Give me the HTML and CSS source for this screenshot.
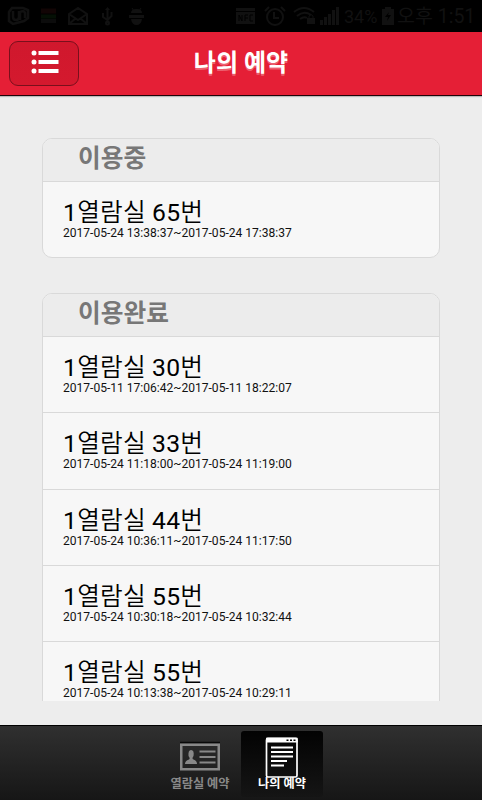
FILE: index.html
```html
<!DOCTYPE html>
<html lang="ko">
<head>
<meta charset="utf-8">
<title>나의 예약</title>
<link rel="stylesheet" href="styles.css">
</head>
<body>
<div class="status">
  <svg class="status-icons" width="160" height="32" viewBox="0 0 160 32" fill="none" stroke="#111" stroke-width="2">
    <path d="M12 8h11l5 2v8l-4 3-11 3-4-3v-9zM13 11v6q0 3 3 3t3-3v-6M20 20v-8q4-2 5 1v5" stroke-width="2.500"/>
    <path d="M41 11h15" stroke="#120505" stroke-width="5"/><path d="M41 16.500h15" stroke="#051005" stroke-width="4"/><path d="M41 21h15" stroke="#0c0c0c" stroke-width="4"/>
    <path d="M69 14l9-6 9 6v10H69zM69 14l9 6 9-6M69 24l7-6M87 24l-7-6"/>
    <path d="M107.500 9v14M103 13v4l4.500 3 4-4v-4"/><path d="M105 10l2.500-3 2.500 3z" fill="#111" stroke="none"/><circle cx="107.500" cy="23" r="1.500"/>
    <path d="M131 13q0-4 5.500-4t5.500 4zM129 15h15v3h-15zM131 19h11q-1 6-5.500 6t-5.500-6z" fill="#111" stroke="none"/><path d="M132 8l2 3M141 8l-2 3" stroke-width="1"/>
  </svg>
  <svg class="status-icons" width="106" height="32" viewBox="234 0 106 32" fill="none" stroke="#111" stroke-width="2">
    <path d="M236 8h19v3h-19zM236 12h19v12h-19z" fill="#111" stroke="none"/>
    <path d="M239 21v-6l3 6v-6M245 21v-6h3M245 18h3M253 15h-3v6h3" stroke="#000" stroke-width="1"/>
    <circle cx="275" cy="17" r="8"/><path d="M274 12v6h5M265 11l4-4M285 11l-4-4"/>
    <path d="M294 12q10-8 20 0M297 16q7-6 14-1M300 19q4-3 7-1"/><path d="M307 18h8v6h-8z" fill="#111" stroke="none"/><path d="M309 18v-2q2-3 4 0v2" stroke-width="1"/>
    <path d="M321.500 25v-5M325.500 25v-8M329.500 25V14M333.500 25V10M337.500 25V7" stroke-width="3"/>
  </svg>
  <span class="percent">34%</span>
  <svg class="battery" width="12" height="20" viewBox="0 0 12 20"><path d="M0 3h3V1h6v2h3v16H0z" fill="#111"/><path d="M7 6l-4 5h3l-1 4 4-6H6z" fill="#000"/></svg>
  <span class="clock">오후 1:51</span>
</div>
<header class="header">
  <button class="menu" aria-label="메뉴">
    <svg width="30" height="26" viewBox="0 0 30 26" fill="#fff"><circle cx="4" cy="4" r="2.500"/><circle cx="4" cy="13" r="2.500"/><circle cx="4" cy="22" r="2.500"/><path d="M8.500 2h20v4h-20zM8.500 11h20v4h-20zM8.500 20h20v4h-20z"/></svg>
  </button>
  <h1>나의 예약</h1>
</header>
<main class="content">
  <section class="card">
    <h2>이용중</h2>
    <div class="row"><p class="seat"><b>1</b>열람실 <b>65</b>번</p><p class="time">2017-05-24 13:38:37~2017-05-24 17:38:37</p></div>
  </section>
  <section class="card">
    <h2>이용완료</h2>
    <div class="row"><p class="seat"><b>1</b>열람실 <b>30</b>번</p><p class="time">2017-05-11 17:06:42~2017-05-11 18:22:07</p></div>
    <div class="row"><p class="seat"><b>1</b>열람실 <b>33</b>번</p><p class="time">2017-05-24 11:18:00~2017-05-24 11:19:00</p></div>
    <div class="row"><p class="seat"><b>1</b>열람실 <b>44</b>번</p><p class="time">2017-05-24 10:36:11~2017-05-24 11:17:50</p></div>
    <div class="row"><p class="seat"><b>1</b>열람실 <b>55</b>번</p><p class="time">2017-05-24 10:30:18~2017-05-24 10:32:44</p></div>
    <div class="row"><p class="seat"><b>1</b>열람실 <b>55</b>번</p><p class="time">2017-05-24 10:13:38~2017-05-24 10:29:11</p></div>
  </section>
</main>
<nav class="tabs">
  <div class="tab">
    <svg width="42" height="42" viewBox="0 0 42 42"><path d="M1 6.500h40" stroke="#080808" stroke-width="1.500"/><path d="M2.250 8.750h37.500v24.500H2.250z" fill="none" stroke="#888" stroke-width="2.500"/><path d="M6 28q0-3.500 4-4.500 1.500-1-.5-3.500-.5-6 2.500-6 3.500 0 2.500 6-2 2.500 0 3.500 3.500 1 3.500 4.500z" fill="#888"/><path d="M20.500 15.500h16M20.500 21h16M20.500 26.500h16" stroke="#888" stroke-width="2"/></svg>
    <span>열람실 예약</span>
  </div>
  <div class="tab active">
    <svg width="42" height="42" viewBox="0 0 42 42"><rect x="5.500" y="2.500" width="30.500" height="38.500" rx="1.500" fill="none" stroke="#fff" stroke-width="1.700"/><path d="M5 2.500q0-1 1-1h29.500q1.200 0 1.200 1v4H5z" fill="#fff"/><path d="M25.500 4.200h2M29 4.200h2M32.500 4.200h2" stroke="#000" stroke-width="1.500"/><path d="M10 11.500h22M10 16h22M10 20.500h22M10 25h16M10 29.500h13" stroke="#fff" stroke-width="1.800"/></svg>
    <span>나의 예약</span>
  </div>
</nav>
</body>
</html>
```

FILE: styles.css
```css
* { box-sizing: border-box; }
body {
  margin: 0;
  width: 482px;
  height: 800px;
  overflow: hidden;
  display: flex;
  flex-direction: column;
  background: #ededed;
  font-family: Roboto, "Noto Sans CJK KR", sans-serif;
}
h1, h2, p { margin: 0; }
.status {
  flex: none;
  height: 32px;
  display: flex;
  align-items: center;
  background: #000;
  color: #111;
  line-height: 33px;
  white-space: nowrap;
}
.status-icons { flex: none; }
.status-icons + .status-icons { margin-left: 74px; }
.percent { margin-left: 4px; width: 34px; font-size: 18px; }
.battery { margin-left: 4px; }
.clock { margin-left: 3px; font-size: 19.500px; }
.header {
  flex: none;
  height: 64px;
  display: grid;
  grid-template-columns: 80px 1fr 80px;
  background: #e51f36;
  border-bottom: 1px solid #200308;
  box-shadow: 0 1px 1px #bbb;
}
.menu {
  width: 70px;
  height: 45px;
  margin: 9px 0 0 9px;
  padding: 7px 0 0 19.500px;
  display: flex;
  align-items: flex-start;
  border: 1px solid #79101c;
  border-radius: 9px;
  background: linear-gradient(#d0182d, #d4192e);
}
.header h1 {
  color: #fff;
  font-size: 24px;
  line-height: 62px;
  font-weight: 700;
  text-align: center;
  text-shadow: 0 2px 0 rgba(255, 255, 255, .3);
}
.content {
  flex: none;
  height: 605px;
  padding: 42px 42px 0 42px;
  overflow: hidden;
}
.card {
  margin-bottom: 35px;
  overflow: hidden;
  border: 1px solid #d9d9d9;
  border-radius: 10px;
  background: #f7f7f7;
}
.card h2 {
  height: 42px;
  padding-left: 35px;
  background: #ececec;
  color: #777;
  font-size: 24.700px;
  line-height: 39px;
  font-weight: 700;
}
.row {
  height: 76.200px;
  padding: 14px 0 0 20px;
  border-top: 1px solid #d9d9d9;
}
.seat {
  color: #000;
  font-size: 24.700px;
  line-height: 33px;
  font-weight: 350;
  letter-spacing: .15px;
}
.seat b {
  font-weight: 400;
  letter-spacing: .3px;
}
.time {
  color: #111;
  font-size: 12.050px;
  line-height: 8px;
}
.tabs {
  flex: none;
  height: 75px;
  margin-top: 24px;
  padding-top: 5px;
  display: flex;
  justify-content: center;
  border-top: 1px solid #000;
  background: linear-gradient(#303030, #161616);
}
.tab {
  width: 82px;
  height: 66px;
  padding-top: 5px;
  display: flex;
  flex-direction: column;
  align-items: center;
  border-radius: 3px;
  color: #888;
  font-size: 12.200px;
  font-weight: 700;
  line-height: 12px;
  white-space: nowrap;
}
.tab.active {
  background: linear-gradient(#030303, #151515);
  color: #fff;
}
```
